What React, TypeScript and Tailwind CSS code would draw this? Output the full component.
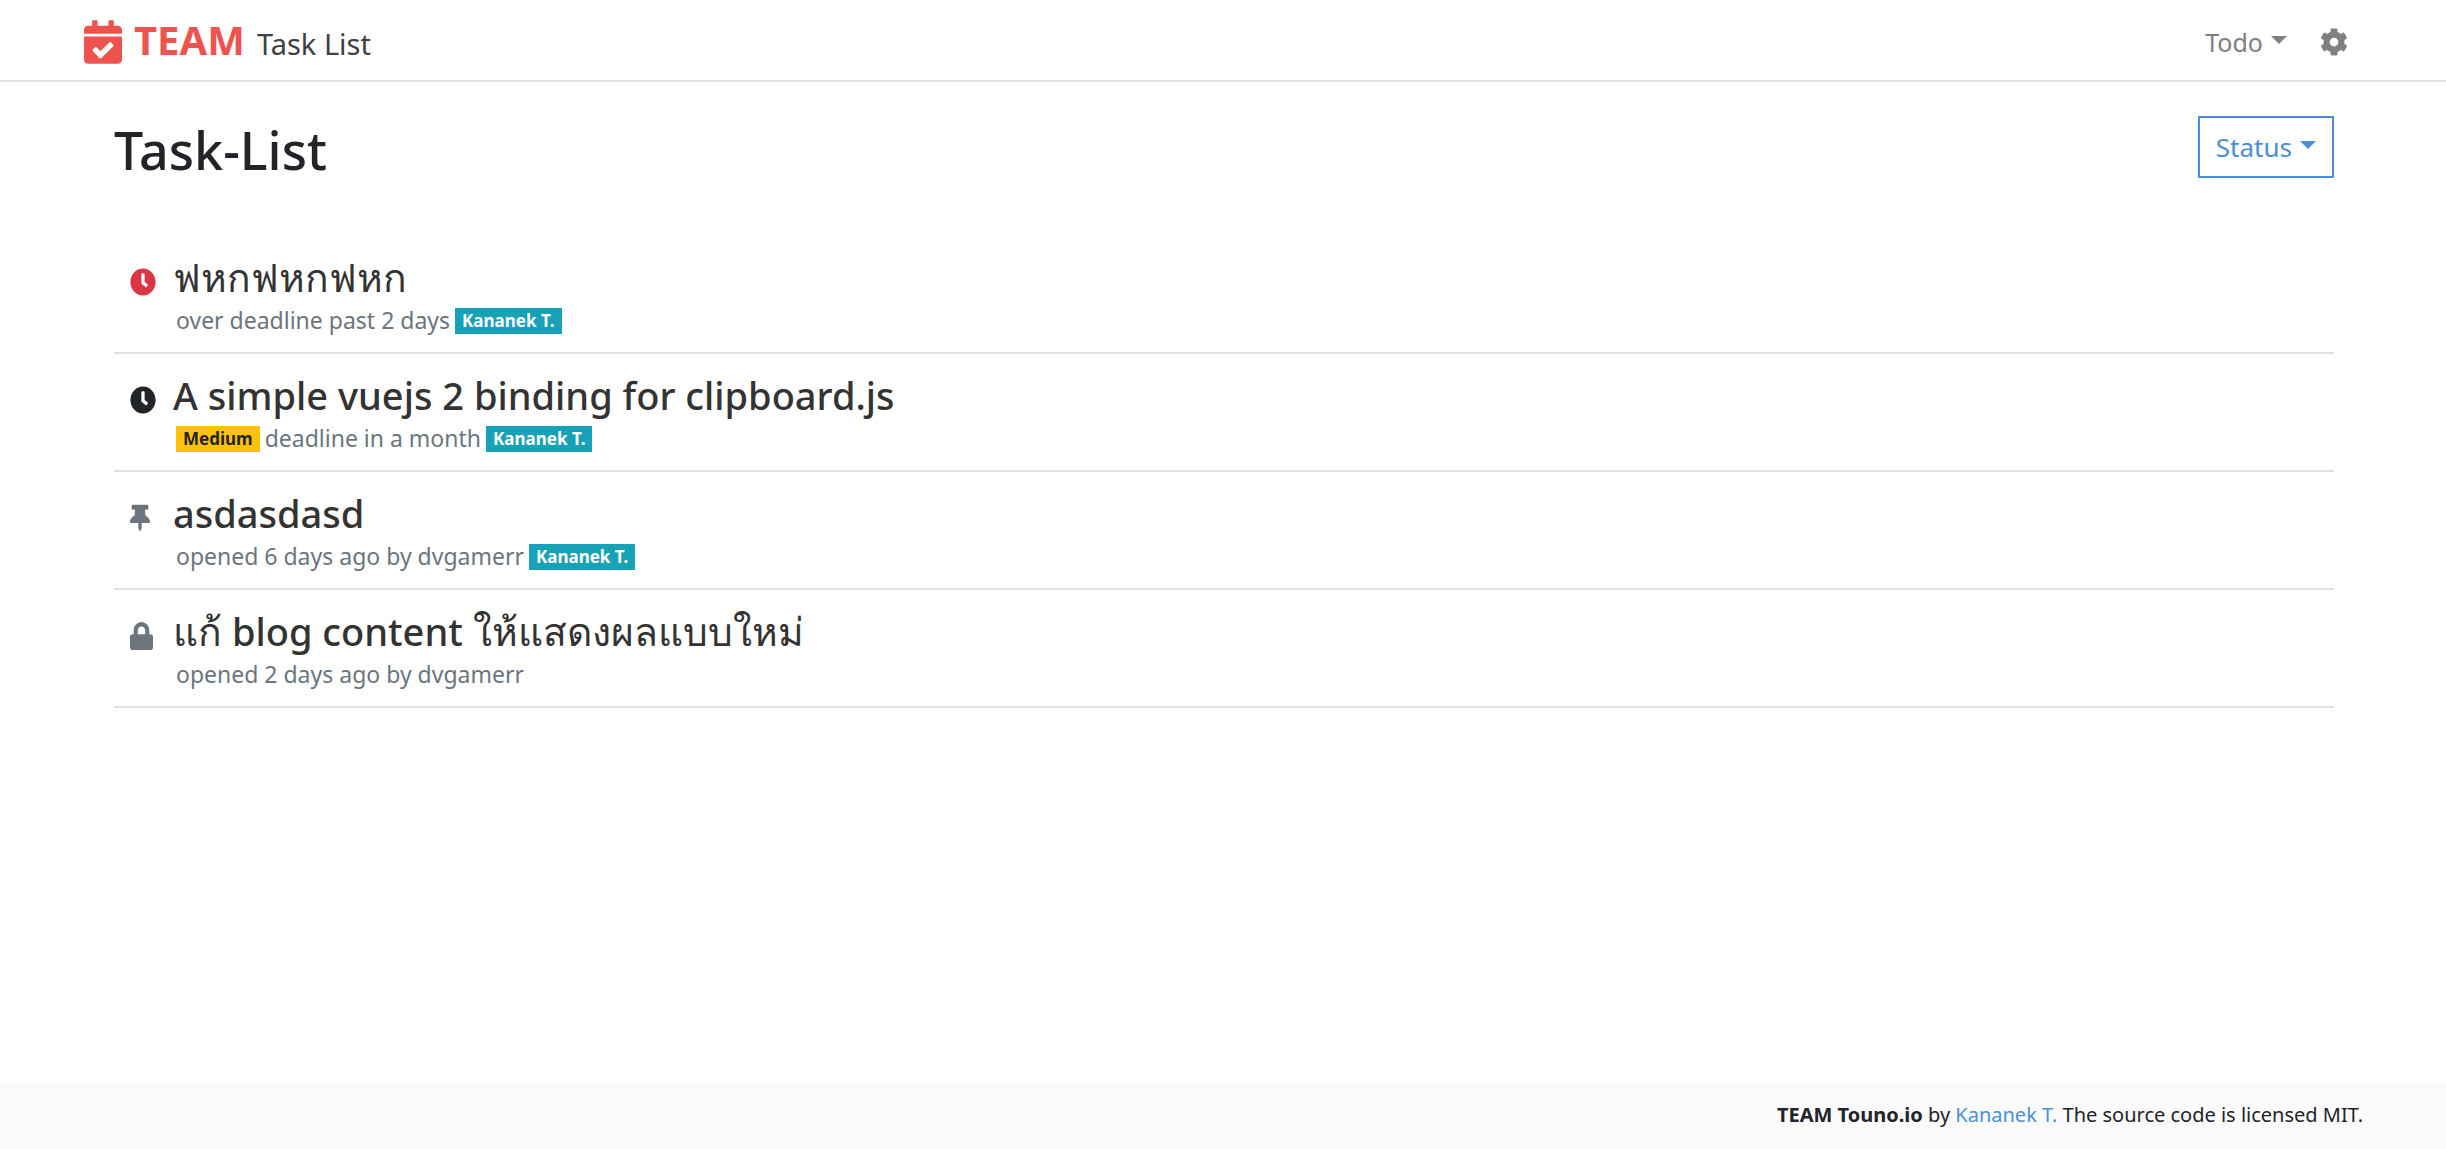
import type { ReactNode } from "react";
import { FaCalendarCheck, FaClock, FaCog, FaLock, FaThumbtack } from "react-icons/fa";

type Task = {
  title: string;
  icon: ReactNode;
  priority?: string;
  note: string;
  assignee?: string;
};

const tasks: Task[] = [
  {
    title: "ฟหกฟหกฟหก",
    icon: <FaClock preserveAspectRatio="none" className="h-7 w-[26px] text-[#dc3545]" />,
    note: "over deadline past 2 days",
    assignee: "Kananek T.",
  },
  {
    title: "A simple vuejs 2 binding for clipboard.js",
    icon: <FaClock preserveAspectRatio="none" className="h-7 w-[26px] text-[#212529]" />,
    priority: "Medium",
    note: "deadline in a month",
    assignee: "Kananek T.",
  },
  {
    title: "asdasdasd",
    icon: <FaThumbtack className="h-7 w-5 text-[#6c757d]" />,
    note: "opened 6 days ago by dvgamerr",
    assignee: "Kananek T.",
  },
  {
    title: "แก้ blog content ให้แสดงผลแบบใหม่",
    icon: <FaLock preserveAspectRatio="none" className="h-7 w-[23px] text-[#6c757d]" />,
    note: "opened 2 days ago by dvgamerr",
  },
];

function Caret() {
  return (
    <svg viewBox="0 0 16 8" className="mb-1 h-2 w-4 fill-current" aria-hidden="true">
      <path d="M0 0h16L8 8z" />
    </svg>
  );
}

function Badge({ className, children }: { className: string; children: ReactNode }) {
  return (
    <span className={`flex h-[26px] items-center px-[7px] text-[17px] font-bold ${className}`}>
      {children}
    </span>
  );
}

// Thai glyphs run small next to Latin ones, so they are set slightly larger.
function Title({ text }: { text: string }) {
  return text.split(/([\u0e00-\u0e7f]+)/).map((part, i) =>
    i % 2 === 1 ? (
      <span key={i} className="text-[39px]">
        {part}
      </span>
    ) : (
      part
    ),
  );
}

function TaskRow({ task }: { task: Task }) {
  return (
    <li className="flex h-[118px] items-start border-b-2 border-[#dee2e6] pl-4">
      <div className="mt-8 w-[43px] shrink-0">{task.icon}</div>
      <div className="mt-[17px]">
        <h2 className="h-12 text-[38px] leading-[48px] font-medium whitespace-nowrap text-[#333333]">
          <Title text={task.title} />
        </h2>
        <div className="mt-[7px] flex h-[26px] items-center gap-[5px] pl-[3px] text-[#6c757d]">
          {task.priority && <Badge className="bg-[#ffc107] text-[#212529]">{task.priority}</Badge>}
          <span className="pb-[3px] text-[23px] leading-[26px] whitespace-nowrap">{task.note}</span>
          {task.assignee && <Badge className="bg-[#17a2b8] text-white">{task.assignee}</Badge>}
        </div>
      </div>
    </li>
  );
}

export default function App() {
  return (
    <div className="flex min-h-screen flex-col bg-white font-['Noto_Sans','Segoe_UI',sans-serif] text-[#212529]">
      <header className="flex h-[82px] items-center justify-between border-b-2 border-[#dee2e6] pr-[98px] pl-[84px]">
        <a href="#" className="flex items-center">
          <FaCalendarCheck className="mt-1 h-11 w-[38px] text-[#ef5350]" />
          <span className="ml-3 text-[40px] leading-[60px] font-bold text-[#ef5350]">TEAM</span>
          <span className="mt-2 ml-3 text-[29px] leading-[44px] text-[#404040]">Task List</span>
        </a>
        <nav className="flex items-center gap-[33px] text-[#808080]">
          <button type="button" className="mt-1 flex items-center gap-2 text-[25px] leading-[40px]">
            Todo
            <Caret />
          </button>
          <button type="button" aria-label="Settings" className="mt-[3px]">
            <FaCog className="size-7" />
          </button>
        </nav>
      </header>

      <main className="flex-1 pt-[34px] pr-28 pl-[114px]">
        <div className="flex h-[120px] items-start justify-between">
          <h1 className="text-[52px] leading-[68px] font-medium">Task-List</h1>
          <button
            type="button"
            className="flex h-[62px] items-center gap-2 border-2 border-[#4a8fd8] px-4 text-[26px] text-[#4a8fd8]"
          >
            Status
            <Caret />
          </button>
        </div>
        <ul>
          {tasks.map((task) => (
            <TaskRow key={task.title} task={task} />
          ))}
        </ul>
      </main>

      <footer className="flex h-[66px] items-center justify-end bg-[#fafafa] pr-[83px] pb-[2px] text-[20px]">
        <p>
          <strong>TEAM Touno.io</strong> by{" "}
          <a href="#" className="text-[#4a8fd8]">
            Kananek T.
          </a>{" "}
          The source code is licensed MIT.
        </p>
      </footer>
    </div>
  );
}
